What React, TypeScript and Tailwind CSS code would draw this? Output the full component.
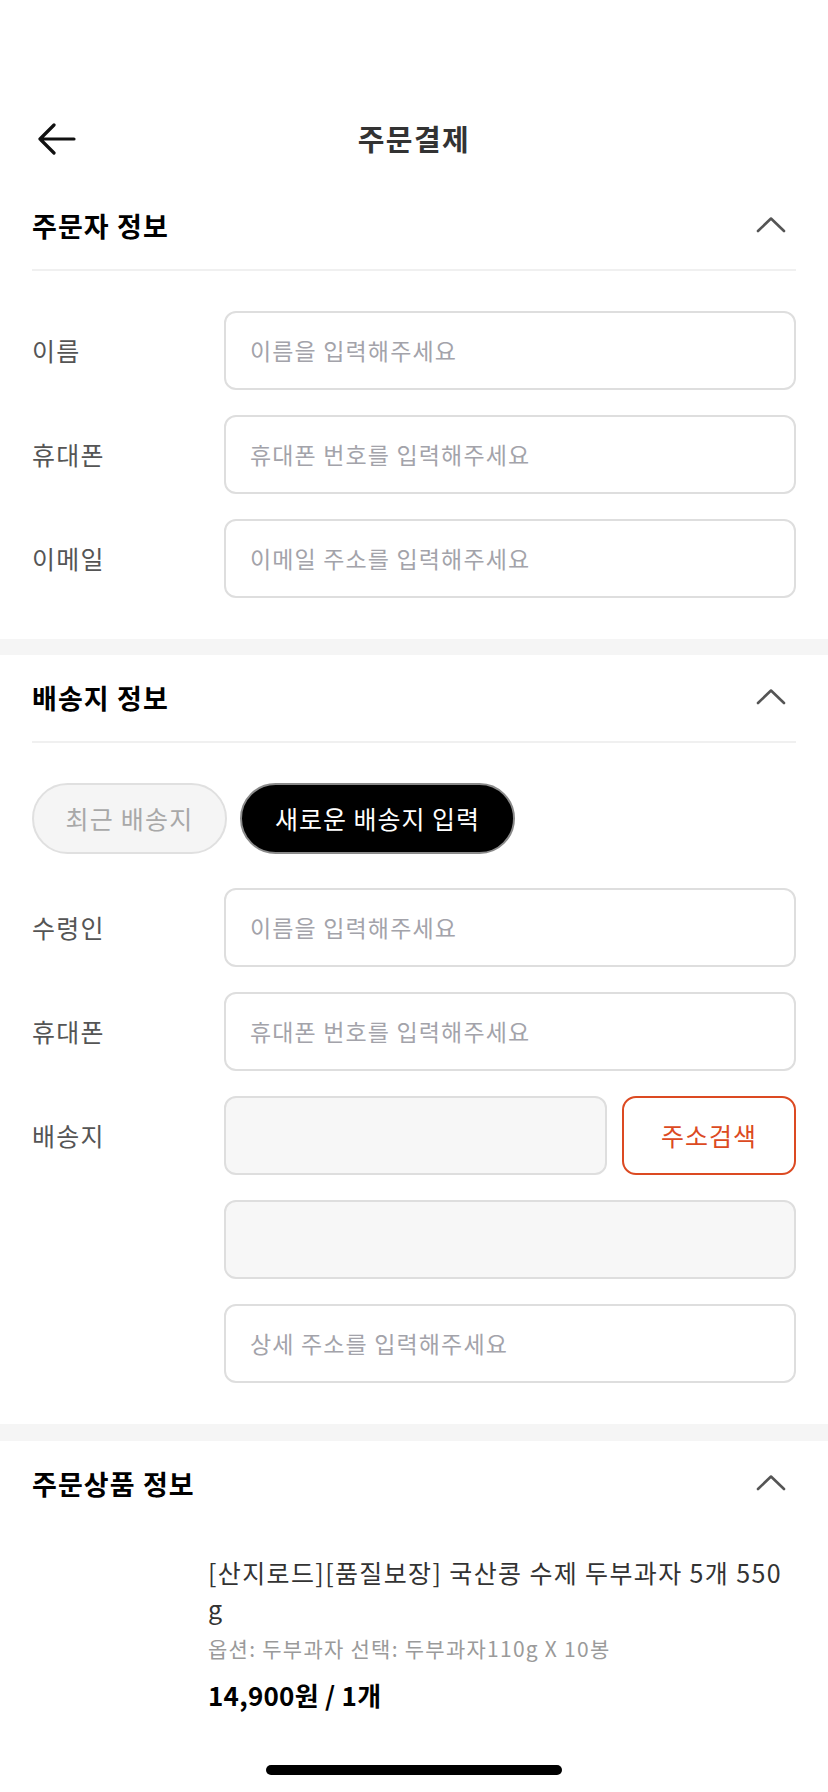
const FONT = { fontFamily: '"Noto Sans CJK KR", "Noto Sans", sans-serif' };

function Chevron() {
  return (
    <svg width="30" height="18" viewBox="0 0 30 18" fill="none">
      <polyline points="2,15 15,2.5 28,15" stroke="#555" strokeWidth="2.6" strokeLinecap="round" strokeLinejoin="round" />
    </svg>
  );
}

function SectionHeader({ title, divider = true }: { title: string; divider?: boolean }) {
  return (
    <div className="px-[32px]">
      <div className="flex h-[86px] items-center justify-between">
        <h2 className="text-[27px] font-bold tracking-[0.04em] text-black">{title}</h2>
        <div className="mr-[10px] mt-[-2px]">
          <Chevron />
        </div>
      </div>
      {divider && <div className="h-[2px] bg-[#f0f0f0]" />}
    </div>
  );
}

function Field({ placeholder, disabled = false }: { placeholder?: string; disabled?: boolean }) {
  return (
    <div
      className={`flex h-[79px] w-full items-center rounded-[12px] border-2 border-[#dedede] pl-[24px] text-[23px] tracking-[0.05em] ${
        disabled ? "bg-[#f7f7f7]" : "bg-white"
      }`}
    >
      {placeholder && <span className="text-[#a3a3aa]">{placeholder}</span>}
    </div>
  );
}

function Row({ label, children }: { label?: string; children: React.ReactNode }) {
  return (
    <div className="grid grid-cols-[192px_1fr] items-center">
      <span className="text-[25px] tracking-[0.05em] text-[#555]">{label}</span>
      <div className="flex gap-[15px]">{children}</div>
    </div>
  );
}

export default function App() {
  return (
    <div style={FONT} className="relative min-h-[1792px] w-full bg-white pt-[95px]">
      {/* header */}
      <div className="relative flex h-[88px] items-center justify-center">
        <button className="absolute left-[36px] top-[28px]">
          <svg width="40" height="32" viewBox="0 0 40 32" fill="none">
            <path d="M38 16H4M18 2L4 16L18 30" stroke="#111" strokeWidth="3.2" strokeLinecap="round" strokeLinejoin="round" />
          </svg>
        </button>
        <h1 className="text-[29px] font-bold tracking-[0.05em] text-[#333]">주문결제</h1>
      </div>

      {/* 주문자 정보 */}
      <SectionHeader title="주문자 정보" />
      <div className="flex flex-col gap-[25px] px-[32px] pb-[41px] pt-[40px]">
        <Row label="이름">
          <Field placeholder="이름을 입력해주세요" />
        </Row>
        <Row label="휴대폰">
          <Field placeholder="휴대폰 번호를 입력해주세요" />
        </Row>
        <Row label="이메일">
          <Field placeholder="이메일 주소를 입력해주세요" />
        </Row>
      </div>

      <div className="h-[16px] bg-[#f5f5f5]" />

      {/* 배송지 정보 */}
      <SectionHeader title="배송지 정보" />
      <div className="px-[32px] pb-[41px] pt-[40px]">
        <div className="flex gap-[13px]">
          <button className="h-[71px] w-[195px] rounded-full border-2 border-[#e0e0e0] bg-[#f5f5f5] text-[25px] tracking-[0.05em] text-[#a8a8a8]">
            최근 배송지
          </button>
          <button className="h-[71px] w-[275px] rounded-full border-2 border-[#8a8a8a] bg-black text-[25px] tracking-[0.04em] text-white">
            새로운 배송지 입력
          </button>
        </div>
        <div className="mt-[34px] flex flex-col gap-[25px]">
          <Row label="수령인">
            <Field placeholder="이름을 입력해주세요" />
          </Row>
          <Row label="휴대폰">
            <Field placeholder="휴대폰 번호를 입력해주세요" />
          </Row>
          <Row label="배송지">
            <Field disabled />
            <button className="h-[79px] w-[174px] shrink-0 rounded-[14px] border-2 border-[#dc4a22] text-[25px] tracking-[0.04em] text-[#dc4a22]">
              주소검색
            </button>
          </Row>
          <Row>
            <Field disabled />
          </Row>
          <Row>
            <Field placeholder="상세 주소를 입력해주세요" />
          </Row>
        </div>
      </div>

      <div className="h-[17px] bg-[#f5f5f5]" />

      {/* 주문상품 정보 */}
      <SectionHeader title="주문상품 정보" divider={false} />
      <div className="flex gap-[24px] px-[32px] pt-[27px]">
        <div className="w-[152px] shrink-0" />
        <div className="min-w-0 flex-1">
          <p className="break-all text-[25px] leading-[36px] tracking-[0.055em] text-[#333]">
            [산지로드][품질보장] 국산콩 수제 두부과자 5개 550g
          </p>
          <p className="mt-[4px] text-[21px] leading-[36px] tracking-[0.06em] text-[#9a9a9a]">
            옵션: 두부과자 선택: 두부과자110g X 10봉
          </p>
          <p className="mt-[10px] text-[26px] font-bold leading-[38px] tracking-[0.01em] text-black">14,900원 / 1개</p>
        </div>
      </div>

      {/* home indicator */}
      <div className="fixed bottom-[17px] left-1/2 h-[10px] w-[296px] -translate-x-1/2 rounded-full bg-black" />
    </div>
  );
}
